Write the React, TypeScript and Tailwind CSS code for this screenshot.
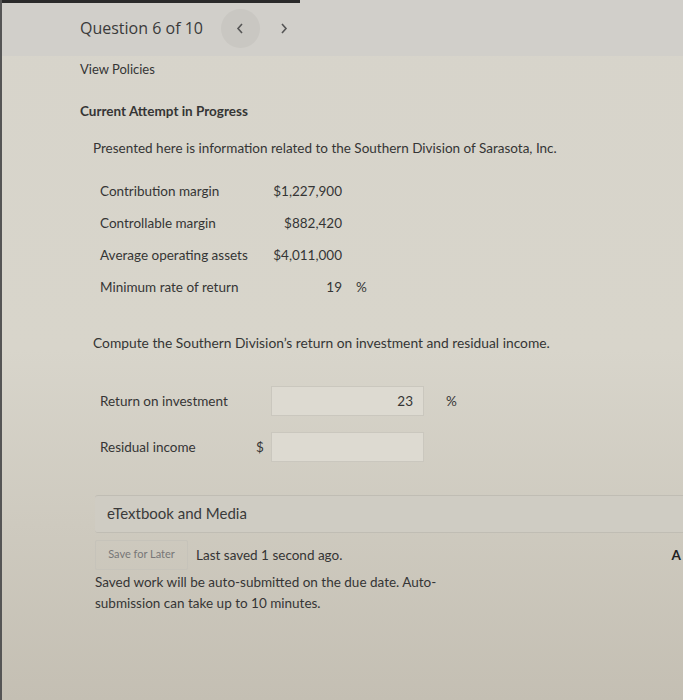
import React from "react";

export default function App() {
  const rows = [
    ["Contribution margin", "$1,227,900", ""],
    ["Controllable margin", "$882,420", ""],
    ["Average operating assets", "$4,011,000", ""],
    ["Minimum rate of return", "19", "%"],
  ];
  return (
    <div
      className="relative w-[683px] h-[700px] overflow-hidden bg-linear-to-b from-[#d7d4cb] via-[#d8d5cb] to-[#c4bfb3] text-[#353535] text-[13.5px]"
      style={{ fontFamily: "Lato, 'Open Sans', sans-serif" }}
    >
      <div className="absolute left-0 top-0 w-[300px] h-[3px] bg-[#2a2a2a]" />
      <div className="absolute left-0 top-0 w-[2px] h-[700px] bg-[#555]" />

      {/* header */}
      <div className="flex items-center h-[56px] pl-[80px] bg-[#d1cfca]">
        <span className="text-[16px] text-[#3a3a3a]" style={{ fontFamily: "'Open Sans', Lato, sans-serif" }}>
          Question 6 of 10
        </span>
        <span className="ml-[18px] flex items-center justify-center w-[39px] h-[39px] rounded-full bg-[#c9c7c2]">
          <svg width="8" height="11" viewBox="0 0 8 11" fill="none" stroke="#555" strokeWidth="1.6">
            <path d="M6 1 L2 5.5 L6 10" />
          </svg>
        </span>
        <span className="ml-[20px] flex items-center">
          <svg width="8" height="11" viewBox="0 0 8 11" fill="none" stroke="#555" strokeWidth="1.6">
            <path d="M2 1 L6 5.5 L2 10" />
          </svg>
        </span>
      </div>

      <div className="pl-[80px] pt-[4px] text-[13px]">View Policies</div>

      <div className="pl-[80px] mt-[21px] font-bold">Current Attempt in Progress</div>

      <div className="pl-[93px] mt-[17px]">
        Presented here is information related to the Southern Division of Sarasota, Inc.
      </div>

      <div className="pl-[100px] mt-[24px] flex flex-col gap-[13px]">
        {rows.map(([l, v, p]) => (
          <div key={l} className="flex items-center h-[19px]">
            <span className="w-[160px]">{l}</span>
            <span className="w-[82px] text-right">{v}</span>
            {p && <span className="ml-[14px]">{p}</span>}
          </div>
        ))}
      </div>

      <div className="pl-[93px] mt-[36px] text-[13.8px]">
        Compute the Southern Division’s return on investment and residual income.
      </div>

      <div className="pl-[100px] mt-[32px] flex items-center">
        <span className="w-[171px]">Return on investment</span>
        <div className="w-[153px] h-[30px] border border-[#cac7be] bg-[#dddad1] flex items-center justify-end pr-[10px]">
          23
        </div>
        <span className="ml-[22px]">%</span>
      </div>

      <div className="pl-[100px] mt-[16px] flex items-center">
        <span className="w-[156px]">Residual income</span>
        <span className="w-[15px]">$</span>
        <div className="w-[153px] h-[30px] border border-[#cac7be] bg-[#dddad1]" />
      </div>

      <div className="ml-[95px] mt-[33px] h-[38px] bg-[#cfccc3] border-t border-b border-[#c0bdb4] rounded-l-[3px] flex items-center pl-[12px] text-[15px] text-[#3a3a3a]">
        eTextbook and Media
      </div>

      <div className="pl-[95px] mt-[7px] flex items-center">
        <div className="w-[93px] h-[30px] border border-[#c6c3ba] rounded-[2px] flex items-center justify-center text-[11px] text-[#777]">
          Save for Later
        </div>
        <span className="ml-[8px]">Last saved 1 second ago.</span>
        <span className="ml-auto mr-[2px] font-bold text-[#222]">A</span>
      </div>

      <div className="pl-[95px] mt-[2px] w-[460px] leading-[21px]">
        Saved work will be auto-submitted on the due date. Auto-submission can take up to 10 minutes.
      </div>
    </div>
  );
}
